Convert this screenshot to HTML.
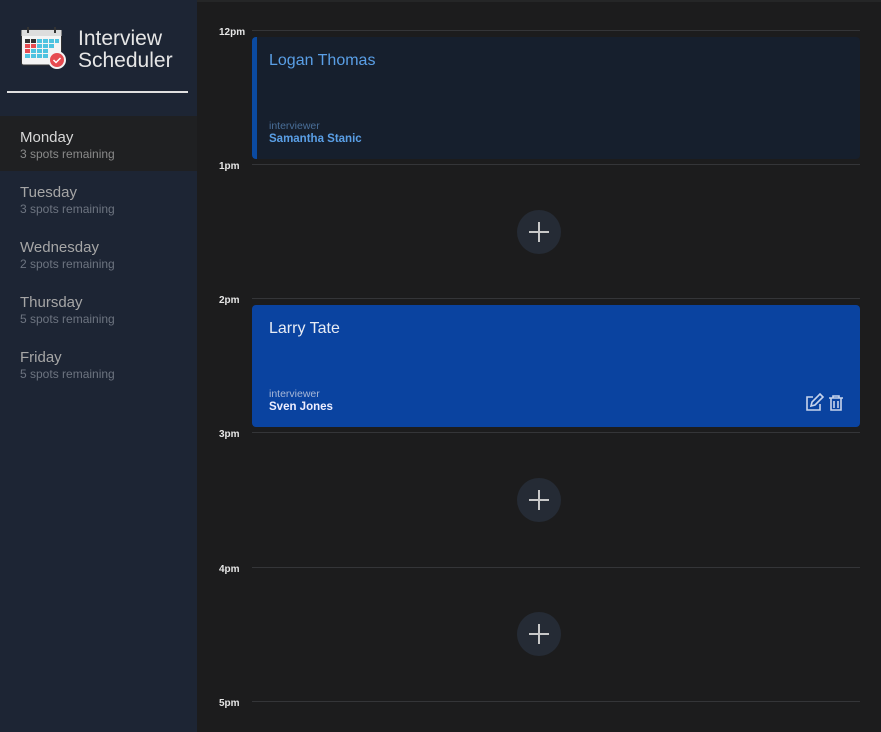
<!DOCTYPE html>
<html><head><style>
*{margin:0;padding:0;box-sizing:border-box}
body{width:881px;height:732px;background:#1c1c1d;font-family:"Liberation Sans",sans-serif;position:relative;overflow:hidden}
.side{position:absolute;left:0;top:0;width:197px;height:732px;background:#1d2534}
.title{position:absolute;left:78px;top:28px;color:#e6e6e6;font-size:21px;line-height:22px;font-weight:300}
.hr{position:absolute;left:7px;top:91px;width:181px;height:2px;background:#e0e0e0}
.day{position:absolute;left:0;width:197px;height:55px;padding:13px 20px 0}
.day b{display:block;font-weight:normal;font-size:15px;color:#a6a6a6}
.day span{display:block;font-size:12px;color:#6d7480;margin-top:1px}
.sel{background:#1f2022}
.sel b{color:#d8d8d8}
.sel span{color:#8a8a8a}
.line{position:absolute;left:252px;width:608px;height:1px;background:#343538}
.lbl{position:absolute;left:219px;font-size:10px;font-weight:bold;color:#e6e6e6}
.card{position:absolute;left:252px;width:608px;height:122px;border-radius:4px;padding:15px 17px}
.nm{font-size:16px}
.iv{position:absolute;left:17px;top:83px;font-size:10.5px}
.ivn{position:absolute;left:17px;top:96px;font-size:11.5px;font-weight:bold}
.plus{position:absolute;left:517px;width:44px;height:44px;border-radius:50%;background:#252b35}
.plus:before,.plus:after{content:"";position:absolute;background:#c8c8c8;left:12px;top:21px;width:20px;height:2px}
.plus:after{left:21px;top:12px;width:2px;height:20px}
</style></head><body>
<div style="position:absolute;left:197px;top:0;width:684px;height:2px;background:#252627"></div>
<div class="side">
<svg style="position:absolute;left:20px;top:26px" width="46" height="44" viewBox="0 0 46 44">
<rect x="1.5" y="4" width="40" height="35" rx="2" fill="#f4f4f4" stroke="#333" stroke-width="1"/>
<rect x="1.5" y="4" width="40" height="6" fill="#ddd"/>
<rect x="7" y="1" width="2" height="6" fill="#333"/><rect x="34" y="1" width="2" height="6" fill="#333"/>
<g fill="#4ec3e0">
<rect x="5" y="13" width="5" height="4" fill="#333"/><rect x="11" y="13" width="5" height="4" fill="#333"/><rect x="17" y="13" width="5" height="4"/><rect x="23" y="13" width="5" height="4"/><rect x="29" y="13" width="5" height="4"/><rect x="35" y="13" width="4" height="4"/>
<rect x="5" y="18" width="5" height="4" fill="#e64b50"/><rect x="11" y="18" width="5" height="4" fill="#e64b50"/><rect x="17" y="18" width="5" height="4"/><rect x="23" y="18" width="5" height="4"/><rect x="29" y="18" width="5" height="4"/>
<rect x="5" y="23" width="5" height="4" fill="#e64b50"/><rect x="11" y="23" width="5" height="4"/><rect x="17" y="23" width="5" height="4"/><rect x="23" y="23" width="5" height="4"/>
<rect x="5" y="28" width="5" height="4"/><rect x="11" y="28" width="5" height="4"/><rect x="17" y="28" width="5" height="4"/><rect x="23" y="28" width="5" height="4"/>
</g>
<circle cx="37" cy="34" r="8" fill="#e64b50" stroke="#f4f4f4" stroke-width="2"/>
<path d="M33.5 34l2.5 2.5 4.5-4.5" stroke="#fff" stroke-width="1.5" fill="none"/>
</svg>
<div class="title">Interview<br>Scheduler</div>
<div class="hr"></div>
<div class="day sel" style="top:116px"><b>Monday</b><span>3 spots remaining</span></div>
<div class="day" style="top:171px"><b>Tuesday</b><span>3 spots remaining</span></div>
<div class="day" style="top:226px"><b>Wednesday</b><span>2 spots remaining</span></div>
<div class="day" style="top:281px"><b>Thursday</b><span>5 spots remaining</span></div>
<div class="day" style="top:336px"><b>Friday</b><span>5 spots remaining</span></div>
</div>

<div class="line" style="top:30px"></div><div class="lbl" style="top:27px">12pm</div>
<div class="line" style="top:164px"></div><div class="lbl" style="top:161px">1pm</div>
<div class="line" style="top:298px"></div><div class="lbl" style="top:295px">2pm</div>
<div class="line" style="top:432px"></div><div class="lbl" style="top:429px">3pm</div>
<div class="line" style="top:567px"></div><div class="lbl" style="top:564px">4pm</div>
<div class="line" style="top:701px"></div><div class="lbl" style="top:698px">5pm</div>

<div class="card" style="top:37px;background:#161f2d;border-left:5px solid #0b4aa0;padding-left:12px">
<div class="nm" style="color:#5a9fe6">Logan Thomas</div>
<div class="iv" style="color:#4a6f99;left:12px">interviewer</div>
<div class="ivn" style="color:#5a9fe6;left:12px">Samantha Stanic</div>
</div>
<div class="plus" style="top:210px"></div>
<div class="card" style="top:305px;background:#0a43a0">
<div class="nm" style="color:#e8ecf4">Larry Tate</div>
<div class="iv" style="color:#a8b8d8">interviewer</div>
<div class="ivn" style="color:#eef">Sven Jones</div>
<svg style="position:absolute;left:552px;top:88px" width="42" height="20" viewBox="0 0 42 20" fill="none" stroke="#c8d4ec" stroke-width="1.6">
<path d="M9 4H3v13h13v-6"/><path d="M7 13l1-4 8-8 3 3-8 8z"/>
<path d="M25 5h14M29 5V3h6v2M27 5v12h10V5M30 8v7M34 8v7"/>
</svg>
</div>
<div class="plus" style="top:478px"></div>
<div class="plus" style="top:612px"></div>
</body></html>
